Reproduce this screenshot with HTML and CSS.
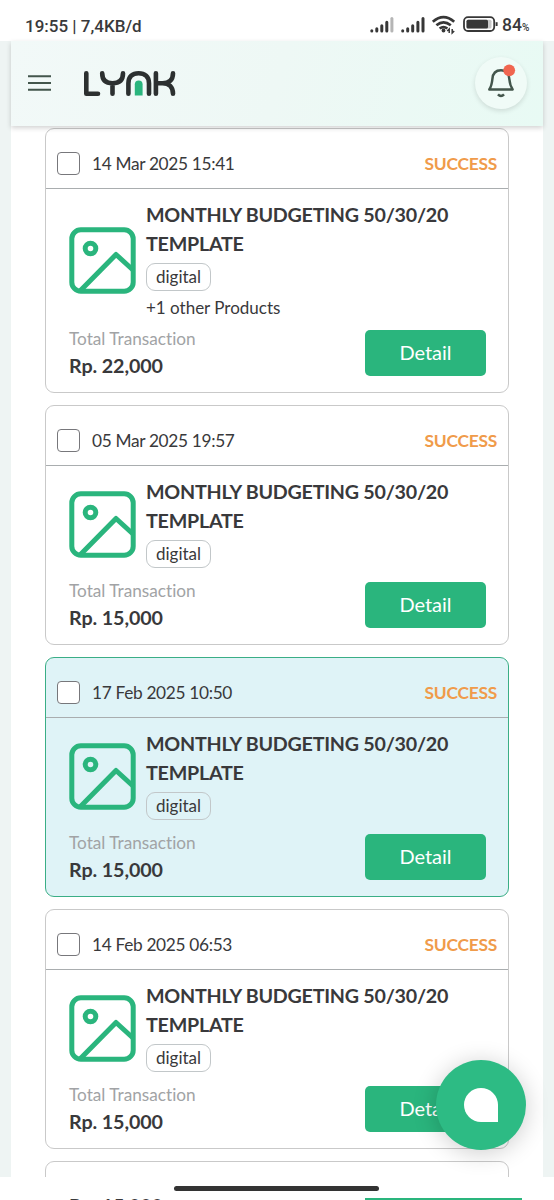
FILE: index.html
```html
<!DOCTYPE html>
<html lang="en">
<head>
<meta charset="utf-8">
<title>Lynk purchases</title>
<link rel="stylesheet" href="styles.css">
</head>
<body>
<svg class="defs" width="0" height="0">
  <symbol id="picture" viewBox="0 0 67 67">
    <g fill="none" stroke="#2ab57d" stroke-width="5" stroke-linejoin="round">
      <rect x="2.8" y="2.8" width="61.4" height="61.4" rx="9"/>
      <circle cx="21.5" cy="21.5" r="5.3"/>
      <path d="M11 64 47 27.5 64 43"/>
    </g>
  </symbol>
</svg>
<div class="screen">
  <div class="status">
    <span class="clock">19:55 | 7,4KB/d</span>
    <svg class="status-icons" width="130" height="24" viewBox="368 14 130 24">
      <g stroke="#373737" stroke-width="3" stroke-linecap="round">
        <path d="M371.8 31.9V31.8M376.8 31.9V29.8M381.8 31.9V26.8M386.8 31.9V23.3"/>
        <path d="M391.9 31.9V19.6" stroke="#b5b5b5"/>
        <path d="M402.7 31.9V31.8M407.7 31.9V29.8M412.7 31.9V26.8M417.9 31.9V23.3M423 31.9V19.6"/>
      </g>
      <g fill="none" stroke="#373737" stroke-width="2.7">
        <path d="M432.8 22.8Q443.5 13.5 454.2 22.8M436.4 26.3Q443.5 20.4 450.8 26.3M439.6 29.5Q443.5 26.7 447.4 29.5"/>
      </g>
      <circle cx="443.5" cy="31.5" r="1.9" fill="#373737"/>
      <path d="M449.2 34v-4l-2 2M452.2 30v4l2-2" fill="none" stroke="#373737" stroke-width="1.5"/>
      <rect x="464" y="18.2" width="30.2" height="13.8" rx="4" fill="none" stroke="#373737" stroke-width="1.8"/>
      <rect x="466.5" y="20.7" width="25" height="8.8" rx="1.5" fill="#c8c8c8"/>
      <rect x="466.5" y="20.7" width="21.5" height="8.8" rx="1.5" fill="#373737"/>
      <path d="M496.6 23.2v3.8" stroke="#373737" stroke-width="2"/>
    </svg>
    <span class="battery">84<small>%</small></span>
  </div>

  <header class="topbar">
    <svg class="menu" width="23" height="18" viewBox="0 0 23 18"><path d="M0 2.2H23M0 9H23M0 15.8H23" stroke="#43564c" stroke-width="2"/></svg>
    <svg class="logo" width="93" height="28" viewBox="83 69 93 28" role="img" aria-label="LYNK">
      <g fill="none" stroke="#2c3030" stroke-width="4.6" stroke-linecap="round" stroke-linejoin="round">
        <path d="M86.3 73.2V93.8H98"/>
        <path d="M102.2 73.2C102.2 80.5 106.5 83.2 112.5 83.2S123 80.5 123 73.2M112.5 83.2V93.8"/>
        <path d="M128.4 93.8V83.3C128.4 76.5 132.5 73.3 138.6 73.3S149 76.5 149 83.3V93.8"/>
        <path d="M155.9 73.2V93.8M173 73.2C173 80 169 83.3 162.5 83.3H156M162.5 83.3C169 83.3 173 87 173 93.8"/>
      </g>
      <path d="M134.8 95.6V84.3a3.9 3.9 0 0 1 7.8 0V95.6z" fill="#2ab57d"/>
    </svg>
    <button class="bell" aria-label="Notifications">
      <svg width="52" height="52" viewBox="475 57 52 52">
        <path d="M489.3 89.5C491.6 86 492 83 492.4 79C492.8 73.5 496 70.3 501 70.3S508.9 73.5 509.3 79C509.7 83 510.3 86 512.6 89.5Z" fill="none" stroke="#43564c" stroke-width="2.5" stroke-linejoin="round"/>
        <path d="M498 94.3Q501 97.5 504 94.3" fill="none" stroke="#43564c" stroke-width="2.6"/>
        <circle cx="509.2" cy="70.3" r="5.9" fill="#f0654f"/>
      </svg>
    </button>
  </header>

  <main class="sheet">
    <article class="card">
      <div class="card-head"><span class="check"></span><time>14 Mar 2025 15:41</time><b class="state">SUCCESS</b></div>
      <div class="product">
        <svg class="thumb"><use href="#picture"/></svg>
        <div class="info"><h2>MONTHLY BUDGETING 50/30/20 TEMPLATE</h2><span class="tag">digital</span><p class="more">+1 other Products</p></div>
      </div>
      <div class="total"><div><p class="label">Total Transaction</p><p class="price">Rp. 22,000</p></div><button class="detail">Detail</button></div>
    </article>
    <article class="card">
      <div class="card-head"><span class="check"></span><time>05 Mar 2025 19:57</time><b class="state">SUCCESS</b></div>
      <div class="product">
        <svg class="thumb"><use href="#picture"/></svg>
        <div class="info"><h2>MONTHLY BUDGETING 50/30/20 TEMPLATE</h2><span class="tag">digital</span></div>
      </div>
      <div class="total"><div><p class="label">Total Transaction</p><p class="price">Rp. 15,000</p></div><button class="detail">Detail</button></div>
    </article>
    <article class="card active">
      <div class="card-head"><span class="check"></span><time>17 Feb 2025 10:50</time><b class="state">SUCCESS</b></div>
      <div class="product">
        <svg class="thumb"><use href="#picture"/></svg>
        <div class="info"><h2>MONTHLY BUDGETING 50/30/20 TEMPLATE</h2><span class="tag">digital</span></div>
      </div>
      <div class="total"><div><p class="label">Total Transaction</p><p class="price">Rp. 15,000</p></div><button class="detail">Detail</button></div>
    </article>
    <article class="card">
      <div class="card-head"><span class="check"></span><time>14 Feb 2025 06:53</time><b class="state">SUCCESS</b></div>
      <div class="product">
        <svg class="thumb"><use href="#picture"/></svg>
        <div class="info"><h2>MONTHLY BUDGETING 50/30/20 TEMPLATE</h2><span class="tag">digital</span></div>
      </div>
      <div class="total"><div><p class="label">Total Transaction</p><p class="price">Rp. 15,000</p></div><button class="detail">Detail</button></div>
    </article>
    <article class="card"></article>
  </main>

  <button class="chat" aria-label="Chat"><span></span></button>
  <footer class="navbar">
    <div class="handle"></div>
    <div class="peek"><span class="price">Rp. 15,000</span><i></i></div>
  </footer>
</div>
</body>
</html>
```
FILE: styles.css
```css
* { box-sizing: border-box; }
body, h2, p { margin: 0; }
button { border: 0; padding: 0; font: inherit; }
.defs { position: absolute; }
.screen {
  position: relative;
  width: 554px;
  height: 1200px;
  overflow: hidden;
  background: #eef4f3;
  color: #39393b;
  font-family: Lato, sans-serif;
  font-variant-ligatures: none;
}
.status {
  display: flex;
  align-items: center;
  height: 41px;
  padding: 11px 0 0 25px;
  background: #fff;
  font: 500 17px/30px Roboto, sans-serif;
}
.clock { width: 343px; white-space: nowrap; }
.status-icons { margin-top: -2px; }
.battery { margin-left: 4px; font-size: 17.5px; }
.battery small { font-size: 10px; }
.topbar {
  position: relative;
  z-index: 2;
  display: flex;
  align-items: center;
  height: 85px;
  margin: 0 11px;
  padding: 0 17px;
  background: linear-gradient(105deg, #f2f9f8, #eef8f5 50%, #e8faf4);
  box-shadow: 0 2px 5px rgba(0, 0, 0, .18);
}
.menu, .logo { position: relative; top: -.5px; }
.logo { margin-left: 32px; }
.bell {
  width: 52px;
  height: 52px;
  margin-left: auto;
  margin-right: -1px;
  margin-top: -2px;
  border-radius: 50%;
  background: #f0fbf7;
  box-shadow: 0 2px 5px rgba(0, 0, 0, .12);
}
.bell svg { display: block; }
.sheet {
  display: flex;
  flex-direction: column;
  gap: 12px;
  height: 1074px;
  margin: 0 11px;
  padding: 2px 34px 0;
  overflow: hidden;
  background: #fff;
}
.card {
  flex: none;
  min-height: 60px;
  border: 1px solid #c9c9c9;
  border-radius: 9px;
  background: #fff;
}
.active { border-color: #3aae86; background: #dff3f7; }
.card-head {
  display: flex;
  align-items: center;
  height: 60px;
  padding: 10px 11px 0;
  border-bottom: 1px solid #a9adaf;
  font-size: 17.3px;
}
.card-head time { letter-spacing: -.33px; }
.check {
  width: 23px;
  height: 23px;
  margin-right: 12px;
  border: 1.5px solid #77777b;
  border-radius: 4px;
  background: #fff;
}
.state { margin-left: auto; color: #f09b4a; font-size: 17.4px; letter-spacing: -.25px; }
.product { display: flex; align-items: center; padding: 11px 23px 0 22.5px; }
.thumb { flex: none; width: 67px; height: 67px; margin-right: 10.5px; }
.info { flex: 1; }
h2 { font-size: 19.7px; line-height: 29.25px; font-weight: 700; letter-spacing: -.25px; }
.tag {
  display: block;
  width: 65px;
  height: 28px;
  margin: 4.5px 0 4px;
  border: 1px solid #c2c7c9;
  border-radius: 9px;
  font-size: 17px;
  line-height: 25px;
  text-align: center;
}
.more { margin-bottom: 0; font-size: 17px; line-height: 25px; }
.total {
  display: flex;
  justify-content: space-between;
  height: 72px;
  padding: 6px 22px 0 23px;
}
.label { color: #a1a3a5; font-size: 17.2px; line-height: 26px; }
.price { font-size: 19.7px; line-height: 28px; font-weight: 700; letter-spacing: -.1px; }
.detail {
  width: 121px;
  height: 46px;
  margin-top: 4px;
  padding-bottom: 2px;
  border-radius: 5px;
  background: #2ab57d;
  color: #fff;
  font-size: 20px;
}
.chat {
  position: absolute;
  z-index: 3;
  left: 436px;
  top: 1059.5px;
  display: grid;
  place-items: center;
  width: 90px;
  height: 90px;
  border-radius: 50%;
  background: #2dbb84;
  box-shadow: 0 3px 24px rgba(0, 0, 0, .2);
}
.chat span { width: 34px; height: 34px; border-radius: 50% 50% 0 50%; background: #fff; }
.navbar {
  position: absolute;
  z-index: 4;
  left: 0;
  bottom: 0;
  display: flex;
  flex-direction: column;
  justify-content: space-between;
  width: 100%;
  height: 23px;
  padding-top: 9px;
  background: #fff;
}
.handle { width: 205px; height: 5px; margin-left: 174px; border-radius: 3px; background: #333; }
.peek {
  display: flex;
  height: 3px;
  padding-left: 69px;
  overflow: hidden;
}
.peek .price { width: 296px; line-height: 17px; }
.peek i { width: 157px; height: 2px; margin-top: 1px; background: #2ab57d; }
```
